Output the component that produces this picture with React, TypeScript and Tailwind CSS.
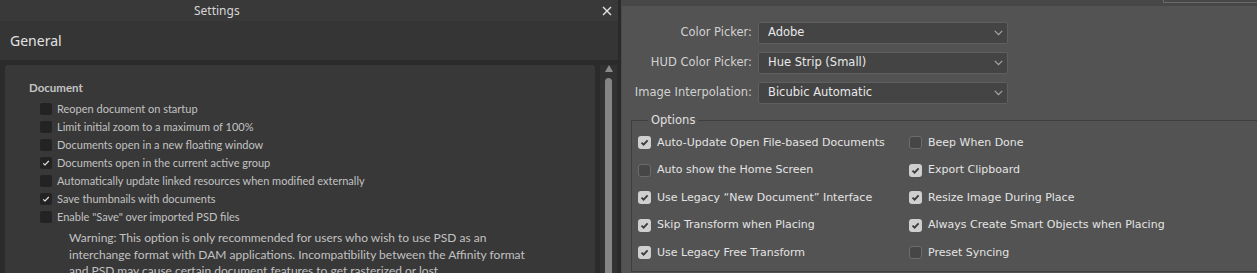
import React from 'react';

const affinityItems: { label: string; checked: boolean }[] = [
    { label: 'Reopen document on startup', checked: false },
    { label: 'Limit initial zoom to a maximum of 100%', checked: false },
    { label: 'Documents open in a new floating window', checked: false },
    { label: 'Documents open in the current active group', checked: true },
    { label: 'Automatically update linked resources when modified externally', checked: false },
    { label: 'Save thumbnails with documents', checked: true },
    { label: 'Enable "Save" over imported PSD files', checked: false },
];

const psSelects = [
    { label: 'Color Picker:', value: 'Adobe' },
    { label: 'HUD Color Picker:', value: 'Hue Strip (Small)' },
    { label: 'Image Interpolation:', value: 'Bicubic Automatic' },
];

const psOptions: { label: string; checked: boolean }[][] = [
    [
        { label: 'Auto-Update Open File-based Documents', checked: true },
        { label: 'Beep When Done', checked: false },
    ],
    [
        { label: 'Auto show the Home Screen', checked: false },
        { label: 'Export Clipboard', checked: true },
    ],
    [
        { label: 'Use Legacy \u201CNew Document\u201D Interface', checked: true },
        { label: 'Resize Image During Place', checked: true },
    ],
    [
        { label: 'Skip Transform when Placing', checked: true },
        { label: 'Always Create Smart Objects when Placing', checked: true },
    ],
    [
        { label: 'Use Legacy Free Transform', checked: true },
        { label: 'Preset Syncing', checked: false },
    ],
];

const AffinityCheck = ({ checked }: { checked: boolean }) => (
    <div className="w-[12px] h-[12px] rounded-[2px] bg-[#232323] flex items-center justify-center shrink-0">
        {checked && (
            <svg width="8" height="8" viewBox="0 0 8 8">
                <path d="M1.2 4.3 L3 6 L6.8 2" fill="none" stroke="#e6e6e6" strokeWidth="1.1" />
            </svg>
        )}
    </div>
);

const PsCheck = ({ checked }: { checked: boolean }) =>
    checked ? (
        <div className="w-[13px] h-[13px] rounded-[3px] bg-[#cfcfcf] flex items-center justify-center shrink-0">
            <svg width="9" height="9" viewBox="0 0 9 9">
                <path d="M1.5 4.6 L3.6 6.6 L7.6 2.3" fill="none" stroke="#3a3a3a" strokeWidth="1.8" />
            </svg>
        </div>
    ) : (
        <div className="w-[13px] h-[13px] rounded-[3px] bg-[#464646] border border-[#6c6c6c] shrink-0" />
    );

export default function App() {
    return (
        <div className="w-[1257px] h-[273px] overflow-hidden flex bg-[#2b2b2b]">
            {/* Affinity settings */}
            <div
                className="w-[618px] h-full flex flex-col"
                style={{ fontFamily: 'Lato, "Noto Sans", sans-serif' }}
            >
                <div
                    className="h-[21px] bg-[#393939] flex items-center justify-between pl-[194px] pr-[5px] shrink-0"
                    style={{ fontFamily: '"Noto Sans", sans-serif' }}
                >
                    <span className="text-[12px] text-[#d6d6d6]">Settings</span>
                    <svg width="12" height="12" viewBox="0 0 12 12">
                        <path d="M2 2 L10 10 M10 2 L2 10" stroke="#e4e4e4" strokeWidth="1.4" />
                    </svg>
                </div>
                <div
                    className="h-[39px] bg-[#353535] flex items-center px-[10px] shrink-0"
                    style={{ fontFamily: '"Noto Sans", sans-serif' }}
                >
                    <span className="text-[14px] text-[#e2e2e2]">General</span>
                </div>
                <div className="flex-1 flex pt-[5px] min-h-0">
                    <div className="ml-[5px] w-[590px] bg-[#383838] rounded-tl-[3px] rounded-tr-[3px] pt-[14px] pl-[24px]">
                        <div className="h-[18px] flex items-center text-[11.5px] font-bold text-[#c4c4c4]">Document</div>
                        <div className="pt-[3px] pl-[11px]">
                            {affinityItems.map((item) => (
                                <div key={item.label} className="h-[18px] flex items-center gap-[5px]">
                                    <AffinityCheck checked={item.checked} />
                                    <span className="text-[11px] text-[#c2c2c2] whitespace-nowrap">{item.label}</span>
                                </div>
                            ))}
                            <div className="pl-[29px] pt-[4px] text-[12px] leading-[16.5px] text-[#c2c2c2] whitespace-nowrap">
                                <div>Warning: This option is only recommended for users who wish to use PSD as an</div>
                                <div>interchange format with DAM applications. Incompatibility between the Affinity format</div>
                                <div>and PSD may cause certain document features to get rasterized or lost.</div>
                            </div>
                        </div>
                    </div>
                    <div className="ml-[5px] w-[17px] bg-[#323232] flex flex-col items-center pt-[0px]">
                        <svg width="8" height="7" viewBox="0 0 8 7">
                            <path d="M4 0 L8 7 L0 7 Z" fill="#8c8c8c" />
                        </svg>
                        <div className="mt-[6px] w-[7px] flex-1 bg-[#858585] rounded-t-[4px]" />
                    </div>
                </div>
            </div>

            {/* divider */}
            <div className="w-[3px] h-full bg-[#2a2a2a]" />

            {/* Photoshop preferences */}
            <div
                className="flex-1 h-full bg-[#535353] border-l border-[#4a4a4a] flex flex-col"
                style={{ fontFamily: '"DejaVu Sans", Verdana, sans-serif' }}
            >
                <div className="h-[6px] bg-[#474747] flex justify-end shrink-0">
                    <div className="w-[94px] h-[3px] border-l border-b border-[#6a6a6a]" />
                </div>
                <div className="pt-[16px] flex flex-col gap-[8px]">
                    {psSelects.map((s) => (
                        <div key={s.label} className="flex items-center">
                            <div className="w-[131px] text-right text-[11.5px] text-[#d2d2d2] pr-[1px]">{s.label}</div>
                            <div className="ml-[5px] w-[250px] h-[22px] bg-[#444444] border border-[#5f5f5f] rounded-[2px] flex items-center justify-between pl-[9px] pr-[4px]">
                                <span className="text-[11.5px] text-[#e8e8e8]">{s.value}</span>
                                <svg width="9" height="6" viewBox="0 0 9 6">
                                    <path d="M0.8 0.8 L4.5 4.6 L8.2 0.8" fill="none" stroke="#a8a8a8" strokeWidth="1.2" />
                                </svg>
                            </div>
                        </div>
                    ))}
                </div>
                <fieldset className="mt-[9px] ml-[9px] h-[159px] border border-[#3f3f3f] border-r-0">
                    <legend className="ml-[16px] px-[3px] text-[11.5px] leading-[14px] text-[#e0e0e0]">Options</legend>
                    <div className="pt-[2px] pl-[6px]">
                        {psOptions.map((row, i) => (
                            <div key={i} className="h-[27.5px] flex items-center">
                                {row.map((opt, j) => (
                                    <div
                                        key={opt.label}
                                        className={`flex items-center gap-[6px] ${j === 0 ? 'w-[271px]' : ''}`}
                                    >
                                        <PsCheck checked={opt.checked} />
                                        <span className="text-[11px] text-[#e4e4e4] whitespace-nowrap">{opt.label}</span>
                                    </div>
                                ))}
                            </div>
                        ))}
                    </div>
                </fieldset>
            </div>
        </div>
    );
}
